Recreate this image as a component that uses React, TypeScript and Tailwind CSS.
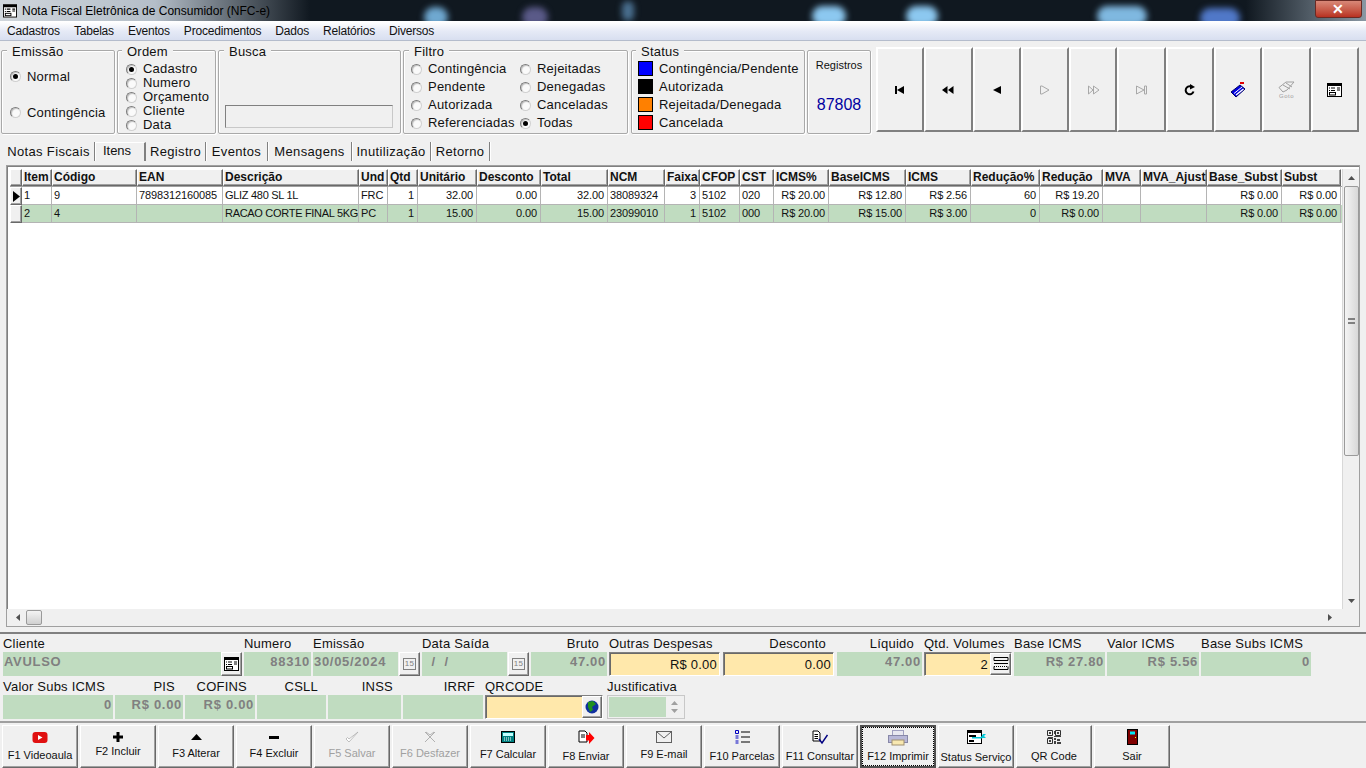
import type { ReactNode } from 'react';

const font = 'font-["Liberation_Sans",Arial,sans-serif]';
const bevel = 'border border-t-white border-l-white border-r-[#696969] border-b-[#696969] shadow-[inset_-1px_-1px_0_#a0a0a0]';
const sunken = 'border border-t-[#808080] border-l-[#808080] border-r-white border-b-white shadow-[inset_1px_1px_0_#696969]';

function Radio({ checked }: { checked?: boolean }) {
  return (
    <span className="relative inline-flex size-[11px] shrink-0 items-center justify-center rounded-full border border-t-[#7c7c7c] border-l-[#7c7c7c] border-r-[#d0d0d0] border-b-[#d0d0d0] bg-[#fafafa] shadow-[inset_1px_1px_1px_#c0c0c0]">
      {checked && <span className="size-[5px] rounded-full bg-black" />}
    </span>
  );
}

function RadioRow({ label, checked, className }: { label: string; checked?: boolean; className?: string }) {
  return (
    <div className={`flex items-center gap-[6px] ${className ?? ''}`}>
      <Radio checked={checked} />
      <span>{label}</span>
    </div>
  );
}

function Group({ title, titleClass = 'left-[5px]', className, children }: { title?: string; titleClass?: string; className: string; children: ReactNode }) {
  return (
    <div className={`relative h-[84px] rounded-[2px] border border-[#a9a9a9] shadow-[inset_1px_1px_0_#fff,1px_1px_0_#fff] ${className}`}>
      {title && <span className={`absolute -top-[7px] bg-[#f0f0f0] px-[5px] leading-[15px] ${titleClass}`}>{title}</span>}
      {children}
    </div>
  );
}

const swatches = [
  ['bg-[#0000ff]', 'Contingência/Pendente'],
  ['bg-black', 'Autorizada'],
  ['bg-[#ff8000]', 'Rejeitada/Denegada'],
  ['bg-[#ff0000]', 'Cancelada'],
];

function NavIcon({ name }: { name: string }) {
  const on = 'fill-black';
  const off = 'fill-none stroke-[#a8a8a8]';
  switch (name) {
    case 'first':
      return <svg width="12" height="10" viewBox="0 0 12 10"><rect className={on} x="1" y="1" width="2" height="8" /><path className={on} d="M3 5 L10 1 V9 Z" /></svg>;
    case 'prior':
      return <svg width="12" height="10" viewBox="0 0 12 10"><path className={on} d="M0 5 L5.500 1 V9 Z M6 5 L11.500 1 V9 Z" /></svg>;
    case 'prev':
      return <svg width="10" height="10" viewBox="0 0 10 10"><path className={on} d="M1 5 L9 1 V9 Z" /></svg>;
    case 'next':
      return <svg width="12" height="10" viewBox="0 0 12 10"><path className={off} d="M1.500 1 V9 H3 L10 5 L3 1 Z" /></svg>;
    case 'next2':
      return <svg width="13" height="10" viewBox="0 0 13 10"><path className={off} d="M1.500 1 V9 L6 5 Z M6.500 1 V9 L12 5 Z" /></svg>;
    case 'last':
      return <svg width="13" height="10" viewBox="0 0 13 10"><path className={off} d="M1.500 1 L9 5 L1.500 9 Z M9.500 1 H11.500 V9 H9.500 Z" /></svg>;
    case 'refresh':
      return <svg width="12" height="12" viewBox="0 0 12 12"><path d="M9.500 7.500 A4 4 0 1 1 7 2.500" fill="none" stroke="black" strokeWidth="2" /><path d="M6 0 L11 3 L6 5.500 Z" fill="black" /></svg>;
    case 'tag':
      return <svg width="17" height="17" viewBox="0 0 17 17"><path d="M1 11 L10 4 L15 8 L6 16 Z" fill="#0000e0" stroke="#000060" /><path d="M4 12.500 L12 6" stroke="white" strokeWidth="1" /><path d="M6 14 L13.500 8" stroke="white" strokeWidth="1.500" /><path d="M10 2 H14" stroke="#e00000" strokeWidth="2" /></svg>;
    case 'goto':
      return (
        <div className="flex flex-col items-center">
          <svg width="17" height="12" viewBox="0 0 17 12"><path d="M1 6.500 L8 1 L16 1 L9 9 L5 11 Z M5 4 L12 8 M8 2 L14 6" fill="none" stroke="#a0a0a0" /></svg>
          <span className="text-[6px] leading-[6px] tracking-[0.5px] text-[#a0a0a0]">Goto</span>
        </div>
      );
    default:
      return <FormIcon />;
  }
}

function FormIcon() {
  return (
    <svg width="15" height="14" viewBox="0 0 15 14">
      <rect x="0.500" y="0.500" width="14" height="13" fill="white" stroke="black" />
      <rect x="0" y="0" width="15" height="3" fill="black" />
      <path d="M2 5 H3 M2 7.500 H3 M4 5 H8 M4 7.500 H8 M10 5 H13 M10 7 H13" stroke="black" strokeWidth="1.200" />
      <rect x="2.500" y="9.500" width="6" height="2.500" fill="none" stroke="black" />
    </svg>
  );
}

const navButtons = ['first', 'prior', 'prev', 'next', 'next2', 'last', 'refresh', 'tag', 'goto', 'form'];

type Col = { name: string; w: number; right?: boolean };
const cols: Col[] = [
  { name: 'Item', w: 30 },
  { name: 'Código', w: 85 },
  { name: 'EAN', w: 86 },
  { name: 'Descrição', w: 136 },
  { name: 'Und', w: 29 },
  { name: 'Qtd', w: 30, right: true },
  { name: 'Unitário', w: 59, right: true },
  { name: 'Desconto', w: 64, right: true },
  { name: 'Total', w: 67, right: true },
  { name: 'NCM', w: 57 },
  { name: 'Faixa', w: 35, right: true },
  { name: 'CFOP', w: 40 },
  { name: 'CST', w: 34 },
  { name: 'ICMS%', w: 55, right: true },
  { name: 'BaseICMS', w: 77, right: true },
  { name: 'ICMS', w: 65, right: true },
  { name: 'Redução%', w: 69, right: true },
  { name: 'Redução', w: 63, right: true },
  { name: 'MVA', w: 38, right: true },
  { name: 'MVA_Ajust', w: 66, right: true },
  { name: 'Base_Subst', w: 75, right: true },
  { name: 'Subst', w: 59, right: true },
];

const rows = [
  ['1', '9', '7898312160085', 'GLIZ 480 SL 1L', 'FRC', '1', '32.00', '0.00', '32.00', '38089324', '3', '5102', '020', 'R$ 20.00', 'R$ 12.80', 'R$ 2.56', '60', 'R$ 19.20', '', '', 'R$ 0.00', 'R$ 0.00'],
  ['2', '4', '', 'RACAO CORTE FINAL 5KG', 'PC', '1', '15.00', '0.00', '15.00', '23099010', '1', '5102', '000', 'R$ 20.00', 'R$ 15.00', 'R$ 3.00', '0', 'R$ 0.00', '', '', 'R$ 0.00', 'R$ 0.00'],
];

function Grid() {
  return (
    <div className="flex min-h-0 flex-1 flex-col">
      <div className="flex h-[18px] border-b border-[#a0a0a0]">
        <div className={`w-[12px] shrink-0 bg-[#f0f0f0] ${bevel}`} />
        {cols.map((c) => (
          <div key={c.name} style={{ width: c.w }} className={`shrink-0 overflow-hidden whitespace-nowrap bg-[#f0f0f0] pl-[1px] text-[12px] leading-[15px] font-bold tracking-normal ${bevel}`}>
            {c.name}
          </div>
        ))}
      </div>
      {rows.map((row, i) => (
        <div key={row[0]} className={`flex h-[18px] ${i === 1 ? 'bg-[#c0dcc0]' : 'bg-white'}`}>
          <div className={`flex w-[12px] shrink-0 items-center justify-center bg-[#f0f0f0] ${bevel}`}>
            {i === 0 && <svg width="7" height="11" viewBox="0 0 7 11"><path d="M0 0 L7 5.500 L0 11 Z" fill="black" /></svg>}
          </div>
          {row.map((v, j) => (
            <div key={j} style={{ width: cols[j].w }} className={`shrink-0 overflow-hidden whitespace-nowrap border-r border-b border-[#b4b4b4] text-[11px] leading-[17px] ${j === 3 ? 'tracking-[-0.3px]' : 'tracking-[-0.12px]'} ${cols[j].right ? 'pr-[3px] text-right' : 'pl-[2px]'}`}>
              {v}
            </div>
          ))}
        </div>
      ))}
    </div>
  );
}

function Field({ label, w, value, tone = 'green', labelRight, align = 'right', children }: { label: string; w: number; value?: string; tone?: 'green' | 'yellow'; labelRight?: boolean; align?: 'left' | 'right'; children?: ReactNode }) {
  return (
    <div style={{ width: w }} className="flex shrink-0 flex-col">
      <span className={`h-[15px] leading-[13px] whitespace-nowrap ${labelRight ? 'pr-[8px] text-right' : ''}`}>{label}</span>
      {tone === 'green' ? (
        <div className={`flex h-[24px] items-start overflow-hidden bg-[#c0dcc0] px-[1px] pt-[1px] text-[13px] leading-[17px] font-bold tracking-[0.7px] whitespace-nowrap text-[#808080] ${align === 'right' ? 'justify-end' : ''}`}>
          {value}
        </div>
      ) : (
        <div className={`flex h-[24px] items-center justify-end overflow-hidden bg-[#ffe8ab] pr-[2px] leading-[15px] ${sunken}`}>
          {value}
          {children}
        </div>
      )}
    </div>
  );
}

function CalButton() {
  return (
    <div className={`flex h-[24px] w-[21px] shrink-0 items-center justify-center bg-[#f0f0f0] ${bevel}`}>
      <span className="flex h-[12px] w-[13px] items-center justify-center border border-[#808080] text-[8px] leading-none text-[#808080]">15</span>
    </div>
  );
}

const fnButtons: { label: string; labelClass: string; icon: ReactNode; disabled?: boolean; focus?: boolean }[] = [
  { label: 'F1 Videoaula', labelClass: 'mt-[3px]', icon: <svg width="16" height="11" viewBox="0 0 16 11"><rect width="15" height="11" x="0.500" rx="3" fill="#e01010" /><path d="M6 3 L10.500 5.500 L6 8 Z" fill="white" /></svg> },
  { label: 'F2 Incluir', labelClass: '-mt-[1px]', icon: <svg width="10" height="10" viewBox="0 0 10 10"><path d="M3.500 0 H6.500 V3.500 H10 V6.500 H6.500 V10 H3.500 V6.500 H0 V3.500 H3.500 Z" fill="black" /></svg> },
  { label: 'F3 Alterar', labelClass: 'mt-[1px]', icon: <svg width="11" height="6" viewBox="0 0 11 6"><path d="M5.500 0 L11 6 H0 Z" fill="black" /></svg> },
  { label: 'F4 Excluir', labelClass: 'mt-[1px]', icon: <svg width="10" height="3" viewBox="0 0 10 3"><rect width="10" height="3" fill="black" /></svg> },
  { label: 'F5 Salvar', labelClass: 'mt-[1px]', disabled: true, icon: <svg width="14" height="12" viewBox="0 0 14 12"><path d="M1 8 L4 11 L13 1 L4 8 L2.500 6.500 Z" fill="white" stroke="#b0b0b0" strokeWidth="0.800" /></svg> },
  { label: 'F6 Desfazer', labelClass: 'mt-[1px]', disabled: true, icon: <svg width="12" height="12" viewBox="0 0 12 12"><path d="M1 1 L11 11 M11 1 L1 11 M2 1 L6 4 M10 1 L6 4" stroke="#b0b0b0" fill="none" /></svg> },
  { label: 'F7 Calcular', labelClass: 'mt-[2px]', icon: <svg width="14" height="12" viewBox="0 0 14 12"><rect x="0.500" y="0.500" width="13" height="11" fill="#008080" stroke="black" /><rect x="2" y="2" width="10" height="3" fill="#c0ffff" /><path d="M3 7 H11 M3 9 H11" stroke="white" strokeDasharray="1 1" /></svg> },
  { label: 'F8 Enviar', labelClass: 'mt-[4px]', icon: <svg width="17" height="15" viewBox="0 0 17 15"><path d="M1 1 H7 L9 3 V12 H1 Z" fill="white" stroke="black" /><path d="M3 5 H7 M3 7 H7" stroke="black" /><path d="M8 5 H11 V2 L16.500 8 L11 14 V10.500 H8 Z" fill="#ff0000" /></svg> },
  { label: 'F9 E-mail', labelClass: 'mt-[2px]', icon: <svg width="16" height="12" viewBox="0 0 16 12"><rect x="0.500" y="0.500" width="15" height="11" fill="none" stroke="#606060" /><path d="M1 1 L8 7 L15 1" fill="none" stroke="#606060" /></svg> },
  { label: 'F10 Parcelas', labelClass: 'mt-[4px]', icon: <svg width="15" height="14" viewBox="0 0 15 14"><path d="M0.500 0.500 H3.500 V3.500 H0.500 Z M0.500 6 H3.500 M0.500 8 H3.500 M0.500 11 H3.500 M0.500 13 H3.500" fill="none" stroke="#0000c0" /><path d="M6 2 H15 M6 7 H15 M6 12 H15" stroke="black" /></svg> },
  { label: 'F11 Consultar', labelClass: 'mt-[4px]', icon: <svg width="16" height="15" viewBox="0 0 16 15"><path d="M1 1 H6 L8 3 V11 H1 Z" fill="white" stroke="black" /><path d="M2.500 4.500 H6 M2.500 6.500 H6 M2.500 8.500 H6" stroke="black" /><path d="M7 9 L10 13 L15.500 5" fill="none" stroke="#000080" strokeWidth="1.500" /></svg> },
  { label: 'F12 Imprimir', labelClass: 'mt-[3px]', focus: true, icon: <svg width="20" height="16" viewBox="0 0 20 16"><rect x="4.500" y="0.500" width="11" height="5" fill="#e8e8f0" stroke="#a0a0c0" /><rect x="0.500" y="5.500" width="19" height="7" fill="#b8b8d8" stroke="#8888a8" /><rect x="4" y="10" width="12" height="5" fill="#f8e8b0" stroke="#a09070" /></svg> },
  { label: 'Status Serviço', labelClass: 'mt-[5px]', icon: <svg width="19" height="14" viewBox="0 0 19 14"><rect x="0.500" y="0.500" width="14" height="13" fill="white" stroke="black" /><rect width="15" height="3" fill="black" /><path d="M2 6 H9 M2 11 H7" stroke="black" strokeWidth="2" /><path d="M5 7 H14 L16 4 H19 L17 6 L19 8 H16 L14 8.500 H5 Z" fill="#00c8d8" /></svg> },
  { label: 'QR Code', labelClass: 'mt-[4px]', icon: <svg width="14" height="14" viewBox="0 0 14 14"><path d="M0.500 0.500 H5.500 V5.500 H0.500 Z M8.500 0.500 H13.500 V5.500 H8.500 Z M0.500 8.500 H5.500 V13.500 H0.500 Z" fill="none" stroke="#303030" /><path d="M2 2 H4 V4 H2 Z M10 2 H12 V4 H10 Z M2 10 H4 V12 H2 Z M7 1 H8 V4 H7 Z M7 6 H14 V7 H7 Z M1 7 H6 V8 H1 Z M7 8 H9 V10 H7 Z M10 9 H13 V11 H10 Z M7 11 H9 V14 H7 Z M10 12 H14 V14 H10 Z" fill="#404040" /></svg> },
  { label: 'Sair', labelClass: 'mt-[4px]', icon: <svg width="11" height="16" viewBox="0 0 11 16"><rect x="0.500" y="0.500" width="10" height="15" fill="#800000" stroke="black" /><rect x="3" y="2.500" width="5" height="3" fill="#00e8f8" /><rect x="8" y="8" width="1" height="1" fill="#ffff00" /></svg> },
];

const tabs: [string, number][] = [
  ['Notas Fiscais', 92],
  ['Itens', 51],
  ['Registro', 60],
  ['Eventos', 62],
  ['Mensagens', 84],
  ['Inutilização', 79],
  ['Retorno', 59],
];

export default function App() {
  return (
    <div className={`${font} flex h-[768px] w-[1366px] flex-col overflow-hidden bg-[#f0f0f0] text-[13px] tracking-[0.22px] text-[#111]`}>
      <div className="relative flex h-[21px] shrink-0 items-center overflow-hidden bg-[#101820]">
        <div className="absolute inset-y-0 left-0 w-[310px] bg-gradient-to-r from-[#d0d6dc] via-[#b4bec8] to-transparent" />
        <div className="absolute top-[7px] left-[424px] h-[20px] w-[24px] rounded-full bg-[#6fa8d0] blur-[3px]" />
        <div className="absolute top-[7px] left-[522px] h-[20px] w-[26px] rounded-full bg-[#5a5a88] blur-[3px]" />
        <div className="absolute top-[1px] left-[622px] h-[20px] w-[12px] rounded-full bg-[#4a7090] blur-[3px]" />
        <div className="absolute top-[6px] left-[812px] h-[20px] w-[34px] rounded-full bg-[#8cc8f0] blur-[3px]" />
        <div className="absolute top-[6px] left-[906px] h-[20px] w-[32px] rounded-full bg-[#8cc8f0] blur-[3px]" />
        <div className="absolute top-[6px] left-[1097px] h-[20px] w-[50px] rounded-full bg-[#7fb8e0] blur-[3px]" />
        <div className="absolute top-[8px] left-[1200px] h-[20px] w-[40px] rounded-full bg-[#5078c8] blur-[3px]" />
        <div className="absolute inset-y-0 right-0 w-[120px] bg-gradient-to-l from-[#8a98a4] to-transparent" />
        <div className="relative ml-[3px] flex size-[14px] items-center justify-center bg-[#e8e8e8]">
          <FormIcon />
        </div>
        <span className="relative ml-[5px] text-[12px] tracking-normal text-black">Nota Fiscal Eletrônica de Consumidor (NFC-e)</span>
        <div className="absolute top-0 right-[4px] flex h-[18px] w-[47px] items-center justify-center rounded-b-[3px] border border-[#6a2a24] bg-gradient-to-b from-[#d88878] to-[#b83020] text-[14px] leading-none font-bold text-white">✕</div>
      </div>
      <div className="flex h-[20px] shrink-0 items-end border-t border-b border-t-white border-b-[#b4bccc] bg-gradient-to-b from-white via-[#e6eaf6] to-[#d8dff0]">
        <div className="flex gap-[14px] pl-[7px] text-[12px] leading-[17px] tracking-[-0.2px]">
          {['Cadastros', 'Tabelas', 'Eventos', 'Procedimentos', 'Dados', 'Relatórios', 'Diversos'].map((m) => (
            <span key={m}>{m}</span>
          ))}
        </div>
      </div>

      <div className="flex h-[100px] shrink-0 items-start pt-[9px] pl-[1px]">
        <Group title="Emissão" className="w-[114px] shrink-0">
          <div className="flex h-full flex-col gap-[16px] pt-[16px] pl-[8px]">
            <RadioRow label="Normal" checked />
            <RadioRow label="Contingência" />
          </div>
        </Group>
        <Group title="Ordem" titleClass="left-[4px]" className="ml-[2px] w-[99px] shrink-0">
          <div className="flex flex-col pt-[11px] pl-[8px] leading-[14px]">
            <RadioRow label="Cadastro" checked className="gap-[5px]" />
            <RadioRow label="Numero" className="gap-[5px]" />
            <RadioRow label="Orçamento" className="gap-[5px]" />
            <RadioRow label="Cliente" className="gap-[5px]" />
            <RadioRow label="Data" className="gap-[5px]" />
          </div>
        </Group>
        <Group title="Busca" className="ml-[2px] w-[183px] shrink-0">
          <div className="mt-[54px] ml-[6px] h-[23px] w-[168px] border border-t-[#808080] border-r-[#c8c8c8] border-b-[#c8c8c8] border-l-[#808080] bg-[#f0f0f0]" />
        </Group>
        <Group title="Filtro" className="ml-[2px] w-[225px] shrink-0">
          <div className="grid grid-cols-[109px_1fr] gap-y-[4px] pt-[11px] pl-[7px] leading-[14px]">
            <RadioRow label="Contingência" />
            <RadioRow label="Rejeitadas" />
            <RadioRow label="Pendente" />
            <RadioRow label="Denegadas" />
            <RadioRow label="Autorizada" />
            <RadioRow label="Canceladas" />
            <RadioRow label="Referenciadas" />
            <RadioRow label="Todas" checked />
          </div>
        </Group>
        <Group title="Status" titleClass="left-[4px]" className="ml-[3px] w-[174px] shrink-0">
          <div className="flex flex-col gap-[3px] pt-[10px] pl-[6px] leading-[15px]">
            {swatches.map(([bg, label]) => (
              <div key={label} className="flex items-center gap-[6px]">
                <span className={`h-[15px] w-[15px] shrink-0 border border-black ${bg}`} />
                <span>{label}</span>
              </div>
            ))}
          </div>
        </Group>
        <Group className="ml-[2px] w-[64px] shrink-0">
          <div className="flex h-full flex-col items-center">
            <span className="mt-[7px] text-[11px] leading-[14px] tracking-normal">Registros</span>
            <span className="mt-[24px] text-[16px] leading-[18px] font-light tracking-normal text-[#0000a0]">87808</span>
          </div>
        </Group>
        <div className="ml-[5px] -mt-[3px] flex w-[483px]">
          {navButtons.map((n) => (
            <div key={n} className="flex h-[85px] flex-1 items-center justify-center border-2 border-t-[#fff] border-r-[#808080] border-b-[#808080] border-l-[#fff] bg-[#f0f0f0]">
              <NavIcon name={n} />
            </div>
          ))}
        </div>
      </div>

      <div className="flex h-[20px] shrink-0 items-end pl-[3px] tracking-[0.35px]">
        {tabs.map(([name, w]) => (
          <div key={name} style={{ width: w }} className={`flex h-[19px] shrink-0 items-center justify-center ${name === 'Itens' ? 'border-t border-r-2 border-l border-t-white border-r-[#808080] border-l-white pr-[6px] pb-[3px] tracking-normal' : 'border-r border-[#808080] shadow-[1px_0_0_#fff]'}`}>
            {name}
          </div>
        ))}
      </div>

      <div className="mx-[6px] mt-[4px] flex h-[462px] shrink-0 flex-col border border-[#a0a0a0] bg-white shadow-[inset_1px_1px_0_#808080]">
        <div className="flex min-h-0 flex-1 pt-[3px] pl-[3px]">
          <Grid />
          <div className="flex w-[17px] shrink-0 flex-col items-center border-l border-[#d8d8d8] bg-[#f0f0f0]">
            <span className="flex h-[17px] items-center justify-center"><svg width="7" height="4" viewBox="0 0 7 4"><path d="M3.500 0 L7 4 H0 Z" fill="#505050" /></svg></span>
            <div className="flex h-[270px] w-[15px] items-center justify-center rounded-[2px] border border-[#9a9a9a] bg-gradient-to-r from-[#f4f4f4] to-[#d8d8d8]">
              <div className="h-[6px] w-[7px] border-y-2 border-[#808080]" />
            </div>
            <span className="mt-auto flex h-[17px] items-center justify-center"><svg width="7" height="4" viewBox="0 0 7 4"><path d="M0 0 H7 L3.500 4 Z" fill="#505050" /></svg></span>
          </div>
        </div>
        <div className="flex h-[17px] shrink-0 items-center bg-[#f0f0f0] pl-[2px]">
          <span className="flex w-[17px] justify-center"><svg width="4" height="7" viewBox="0 0 4 7"><path d="M4 0 V7 L0 3.500 Z" fill="#505050" /></svg></span>
          <div className="h-[15px] w-[16px] rounded-[2px] border border-[#9a9a9a] bg-gradient-to-b from-[#f4f4f4] to-[#d0d0d0]" />
          <span className="mr-[21px] ml-auto flex w-[17px] justify-center"><svg width="4" height="7" viewBox="0 0 4 7"><path d="M0 0 V7 L4 3.500 Z" fill="#505050" /></svg></span>
        </div>
      </div>

      <div className="mt-[5px] flex h-[91px] shrink-0 flex-col border-t-2 border-b-2 border-t-[#808080] border-b-[#a0a0a0] pt-[3px] pl-[3px]">
        <div className="flex items-end">
          <Field label="Cliente" w={218} value="AVULSO" align="left" />
          <div className={`flex h-[24px] w-[21px] shrink-0 items-center justify-center bg-[#f0f0f0] ${bevel}`}><FormIcon /></div>
          <div className="w-[2px]" />
          <Field label="Numero" w={67} value="88310" />
          <div className="w-[2px]" />
          <Field label="Emissão" w={85} value="30/05/2024" align="left" />
          <div className="w-[1px]" />
          <CalButton />
          <div className="w-[2px]" />
          <Field label="Data Saída" w={85} value={'\u00a0\u00a0/\u00a0\u00a0/'} align="left" />
          <div className="w-[1px]" />
          <CalButton />
          <div className="w-[2px]" />
          <Field label="Bruto" w={76} value="47.00" labelRight />
          <div className="w-[2px]" />
          <Field label="Outras Despesas" w={111} value="R$ 0.00" tone="yellow" />
          <div className="w-[3px]" />
          <Field label="Desconto" w={111} value="0.00" tone="yellow" labelRight />
          <div className="w-[3px]" />
          <Field label="Líquido" w={85} value="47.00" labelRight />
          <div className="w-[2px]" />
          <Field label="Qtd. Volumes" w={88} value="2" tone="yellow">
            <span className={`ml-[2px] -mr-[2px] flex h-[22px] w-[21px] items-center justify-center bg-[#f0f0f0] ${bevel}`}>
              <svg width="16" height="14" viewBox="0 0 16 14"><path d="M1 0.500 H15 M1 3.500 H15 M1 6.500 H15 M1 12.500 H15 M1 0.500 V3.500 M15 0.500 V3.500 M1 9.500 V12.500 M15 9.500 V12.500" fill="none" stroke="black" /><path d="M1 9.500 H15" stroke="black" strokeDasharray="1 1" /></svg>
            </span>
          </Field>
          <div className="w-[2px]" />
          <Field label="Base ICMS" w={91} value="R$ 27.80" />
          <div className="w-[2px]" />
          <Field label="Valor ICMS" w={92} value="R$ 5.56" />
          <div className="w-[2px]" />
          <Field label="Base Subs ICMS" w={110} value="0" />
        </div>
        <div className="mt-[4px] flex items-end gap-[2px]">
          <Field label="Valor Subs ICMS" w={110} value="0" />
          <Field label="PIS" w={68} value="R$ 0.00" labelRight />
          <Field label="COFINS" w={70} value="R$ 0.00" labelRight />
          <Field label="CSLL" w={69} labelRight />
          <Field label="INSS" w={73} labelRight />
          <Field label="IRRF" w={80} labelRight />
          <div className="flex w-[118px] shrink-0 flex-col">
            <span className="h-[15px] leading-[13px]">QRCODE</span>
            <div className={`flex h-[24px] justify-end bg-[#ffe8ab] ${sunken}`}>
              <span className={`flex w-[20px] items-center justify-center bg-[#f0f0f0] ${bevel}`}>
                <svg width="14" height="14" viewBox="0 0 14 14"><circle cx="7" cy="7" r="6.500" fill="#1030a0" /><path d="M3 2 L8 1 L11 4 L7 7 L8 10 L5 12 L3 7 Z" fill="#209020" /></svg>
              </span>
            </div>
          </div>
          <div className="ml-[2px] flex w-[78px] shrink-0 flex-col">
            <span className="h-[15px] leading-[13px]">Justificativa</span>
            <div className="flex h-[24px] border border-[#c8c8c8] p-[1px]">
              <div className="flex-1 bg-[#c0dcc0]" />
              <div className="flex w-[17px] flex-col items-center justify-center gap-[4px] bg-[#f0f0f0]">
                <svg width="7" height="4" viewBox="0 0 7 4"><path d="M3.500 0 L7 4 H0 Z" fill="#a0a0a0" /></svg>
                <svg width="7" height="4" viewBox="0 0 7 4"><path d="M0 0 H7 L3.500 4 Z" fill="#a0a0a0" /></svg>
              </div>
            </div>
          </div>
        </div>
      </div>

      <div className="flex flex-1 gap-[2px] pt-[2px] pl-[2px]">
        {fnButtons.map((b) => (
          <div key={b.label} className={`flex h-[43px] w-[76px] shrink-0 flex-col items-center pt-[3px] text-[11px] leading-[14px] tracking-normal whitespace-nowrap ${b.focus ? 'border-2 border-[#505050] outline-1 -outline-offset-3 outline-black outline-dotted' : bevel} ${b.disabled ? 'text-[#a0a0a0]' : ''}`}>
            <span className="flex h-[16px] items-center">{b.icon}</span>
            <span className={b.labelClass}>{b.label}</span>
          </div>
        ))}
      </div>
    </div>
  );
}
